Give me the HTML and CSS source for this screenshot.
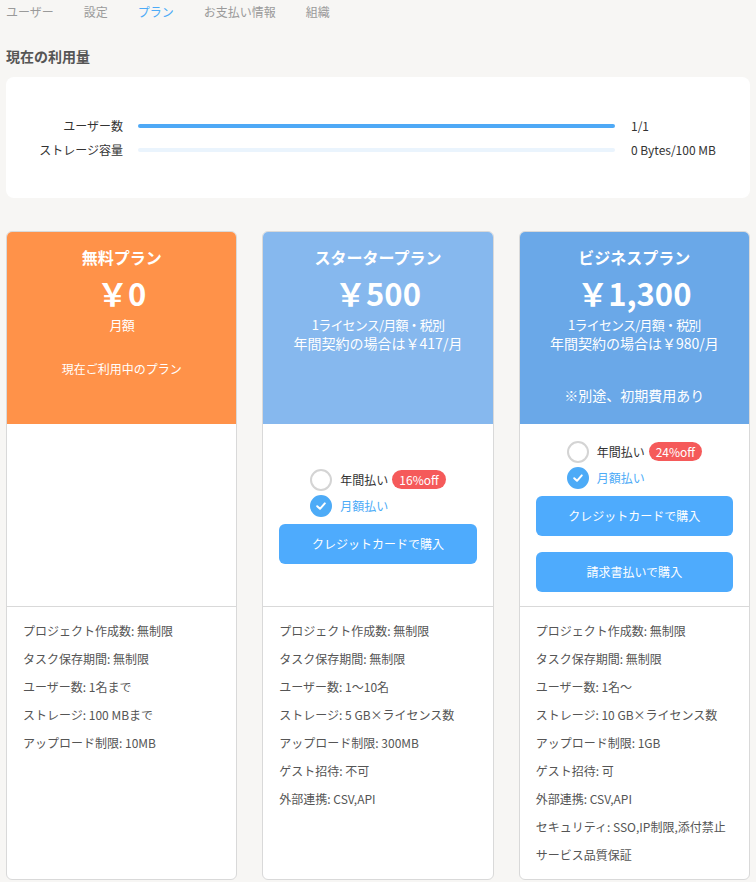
FILE: index.html
```html
<!DOCTYPE html>
<html lang="ja">

<head>
    <meta charset="UTF-8">
    <meta name="viewport" content="width=device-width, initial-scale=1">
    <title>プラン</title>
    <link rel="stylesheet" href="styles.css">
</head>

<body>
    <div class="page">

        <!-- タブ -->
        <nav class="nav">
            <span class="nav-item">ユーザー</span>
            <span class="nav-item">設定</span>
            <span class="nav-item nav-active">プラン</span>
            <span class="nav-item">お支払い情報</span>
            <span class="nav-item">組織</span>
        </nav>

        <h2 class="section-title">現在の利用量</h2>

        <div class="usage">
            <div class="usage-row">
                <span class="usage-label">ユーザー数</span>
                <div class="bar"><div class="bar-fill" style="width: 100%;"></div></div>
                <span class="usage-value">1/1</span>
            </div>
            <div class="usage-row">
                <span class="usage-label">ストレージ容量</span>
                <div class="bar"><div class="bar-fill" style="width: 0%;"></div></div>
                <span class="usage-value">0 Bytes/100 MB</span>
            </div>
        </div>

        <!-- プラン -->
        <div class="plans">

            <div class="card">
                <div class="card-head head-free">
                    <div class="plan-name">無料プラン</div>
                    <div class="plan-price">￥0</div>
                    <div class="plan-sub">月額</div>
                    <div class="plan-current">現在ご利用中のプラン</div>
                </div>
                <div class="card-mid"></div>
                <ul class="features">
                    <li>プロジェクト作成数: 無制限</li>
                    <li>タスク保存期間: 無制限</li>
                    <li>ユーザー数: 1名まで</li>
                    <li>ストレージ: 100 MBまで</li>
                    <li>アップロード制限: 10MB</li>
                </ul>
            </div>

            <div class="card">
                <div class="card-head head-starter">
                    <div class="plan-name">スタータープラン</div>
                    <div class="plan-price">￥500</div>
                    <div class="plan-sub">1ライセンス/月額・税別</div>
                    <div class="plan-sub2">年間契約の場合は￥417/月</div>
                </div>
                <div class="card-mid">
                    <div class="radios">
                        <div class="radio">
                            <span class="circle"></span>
                            <span class="radio-label">年間払い</span>
                            <span class="badge">16%off</span>
                        </div>
                        <div class="radio radio-on">
                            <span class="circle">
                                <svg width="12" height="12" viewBox="0 0 12 12"><polyline points="2.2,6.2 5,8.8 9.8,3.4" fill="none" stroke="#fff" stroke-width="2" stroke-linecap="round" stroke-linejoin="round"/></svg>
                            </span>
                            <span class="radio-label">月額払い</span>
                        </div>
                    </div>
                    <button class="buy">クレジットカードで購入</button>
                </div>
                <ul class="features">
                    <li>プロジェクト作成数: 無制限</li>
                    <li>タスク保存期間: 無制限</li>
                    <li>ユーザー数: 1〜10名</li>
                    <li>ストレージ: 5 GB×ライセンス数</li>
                    <li>アップロード制限: 300MB</li>
                    <li>ゲスト招待: 不可</li>
                    <li>外部連携: CSV,API</li>
                </ul>
            </div>

            <div class="card">
                <div class="card-head head-business">
                    <div class="plan-name">ビジネスプラン</div>
                    <div class="plan-price">￥1,300</div>
                    <div class="plan-sub">1ライセンス/月額・税別</div>
                    <div class="plan-sub2">年間契約の場合は￥980/月</div>
                    <div class="plan-note">※別途、初期費用あり</div>
                </div>
                <div class="card-mid">
                    <div class="radios">
                        <div class="radio">
                            <span class="circle"></span>
                            <span class="radio-label">年間払い</span>
                            <span class="badge">24%off</span>
                        </div>
                        <div class="radio radio-on">
                            <span class="circle">
                                <svg width="12" height="12" viewBox="0 0 12 12"><polyline points="2.2,6.2 5,8.8 9.8,3.4" fill="none" stroke="#fff" stroke-width="2" stroke-linecap="round" stroke-linejoin="round"/></svg>
                            </span>
                            <span class="radio-label">月額払い</span>
                        </div>
                    </div>
                    <button class="buy">クレジットカードで購入</button>
                    <button class="buy buy-gap">請求書払いで購入</button>
                </div>
                <ul class="features">
                    <li>プロジェクト作成数: 無制限</li>
                    <li>タスク保存期間: 無制限</li>
                    <li>ユーザー数: 1名〜</li>
                    <li>ストレージ: 10 GB×ライセンス数</li>
                    <li>アップロード制限: 1GB</li>
                    <li>ゲスト招待: 可</li>
                    <li>外部連携: CSV,API</li>
                    <li>セキュリティ: SSO,IP制限,添付禁止</li>
                    <li>サービス品質保証</li>
                </ul>
            </div>

        </div>
    </div>
</body>

</html>
```

FILE: styles.css
```css
* {
    margin: 0;
    padding: 0;
    box-sizing: border-box;
}

body {
    font-family: "Noto Sans CJK JP", "Noto Sans", sans-serif;
    background: #f7f6f4;
    color: #333;
}

.page {
    padding: 0 6px 3px;
}

.nav {
    display: flex;
    gap: 30px;
    height: 23px;
    align-items: center;
}

.nav-item {
    font-size: 12px;
    color: #9a9a9a;
}

.nav-active {
    color: #4dabf7;
}

.section-title {
    margin-top: 23px;
    font-size: 14px;
    line-height: 20px;
    font-weight: bold;
    color: #555;
}

.usage {
    margin-top: 11px;
    height: 121px;
    background: #fff;
    border-radius: 8px;
    display: flex;
    flex-direction: column;
    justify-content: center;
    gap: 6px;
}

.usage-row {
    display: flex;
    align-items: center;
    height: 18px;
}

.usage-label {
    width: 117px;
    text-align: right;
    font-size: 12px;
    color: #333;
}

.bar {
    margin-left: 15px;
    width: 477px;
    height: 4px;
    border-radius: 2px;
    background: #eaf4fd;
    overflow: hidden;
}

.bar-fill {
    height: 100%;
    background: #4ea9f6;
}

.usage-value {
    margin-left: 16px;
    font-size: 12px;
    color: #333;
}

.plans {
    margin-top: 33px;
    display: grid;
    grid-template-columns: repeat(3, 1fr);
    gap: 25px;
}

.card {
    background: #fff;
    border: 1px solid #d9d9d9;
    border-radius: 6px;
    overflow: hidden;
    display: flex;
    flex-direction: column;
}

.card-head {
    height: 192px;
    padding-top: 14px;
    text-align: center;
    color: #fff;
}

.head-free {
    background: #ff9249;
}

.head-starter {
    background: #86b8ee;
}

.head-business {
    background: #6aa8e8;
}

.plan-name {
    font-size: 16px;
    line-height: 22px;
    font-weight: bold;
}

.plan-price {
    margin-top: 7px;
    font-size: 31px;
    line-height: 36px;
    font-weight: bold;
}

.plan-sub {
    margin-top: 5px;
    font-size: 13px;
    line-height: 18px;
    letter-spacing: -0.8px;
}

.plan-sub2 {
    font-size: 14px;
    line-height: 18px;
}

.plan-current {
    margin-top: 26px;
    font-size: 12px;
    line-height: 18px;
}

.plan-note {
    margin-top: 33px;
    font-size: 14px;
    line-height: 20px;
}

.card-mid {
    height: 183px;
    border-bottom: 1px solid #d9d9d9;
    display: flex;
    flex-direction: column;
    align-items: center;
    justify-content: center;
    padding: 0 16px;
}

.radios {
    display: flex;
    flex-direction: column;
}

.radio {
    display: flex;
    align-items: center;
    height: 26px;
}

.circle {
    width: 22px;
    height: 22px;
    border-radius: 50%;
    border: 2px solid #d4d4d4;
    display: flex;
    align-items: center;
    justify-content: center;
}

.radio-on .circle {
    border-color: #4dabf7;
    background: #4dabf7;
}

.radio-label {
    margin-left: 8px;
    font-size: 12px;
    color: #333;
}

.radio-on .radio-label {
    color: #4dabf7;
}

.badge {
    margin-left: 4px;
    background: #f55a5a;
    color: #fff;
    font-size: 12px;
    line-height: 19px;
    padding: 0 7px;
    border-radius: 10px;
}

.buy {
    margin-top: 5px;
    width: 100%;
    height: 40px;
    border: none;
    border-radius: 6px;
    background: #4eabfd;
    color: #fff;
    font-family: inherit;
    font-size: 12px;
}

.buy-gap {
    margin-top: 16px;
}

.features {
    list-style: none;
    flex: 1;
    padding: 10px 16px 10px;
}

.features li {
    font-size: 12px;
    line-height: 28px;
    color: #555;
}
```
